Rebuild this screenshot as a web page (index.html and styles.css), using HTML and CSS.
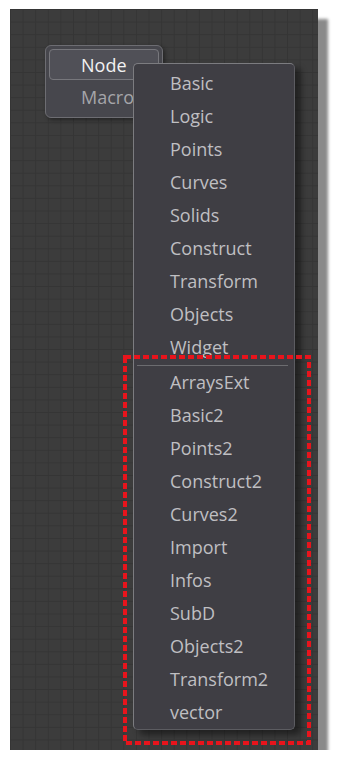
FILE: index.html
```html
<!DOCTYPE html>
<html lang="en">
<head>
    <meta charset="UTF-8">
    <title>Node Menu</title>
    <link rel="stylesheet" href="styles.css">
</head>
<body>
    <div class="canvas">
        <div class="menu">
            <div class="menu-item active">Node</div>
            <div class="menu-item">Macro</div>
        </div>

        <ul class="submenu">
            <li>Basic</li>
            <li>Logic</li>
            <li>Points</li>
            <li>Curves</li>
            <li>Solids</li>
            <li>Construct</li>
            <li>Transform</li>
            <li>Objects</li>
            <li>Widget</li>
            <li class="separator"></li>
            <li>ArraysExt</li>
            <li>Basic2</li>
            <li>Points2</li>
            <li>Construct2</li>
            <li>Curves2</li>
            <li>Import</li>
            <li>Infos</li>
            <li>SubD</li>
            <li>Objects2</li>
            <li>Transform2</li>
            <li>vector</li>
        </ul>

        <!-- highlight around the extra categories -->
        <svg class="highlight" width="188" height="390" viewBox="0 0 188 390">
            <rect x="2" y="2" width="184" height="386" fill="none" stroke="#e8141c" stroke-width="4" stroke-dasharray="6 3"/>
        </svg>
    </div>
</body>
</html>
```

FILE: styles.css
```css
* {
    margin: 0;
    padding: 0;
    box-sizing: border-box;
}

body {
    background: #fff;
    font-family: "Open Sans", "Noto Sans", sans-serif;
    font-size: 18px;
}

/* Dark grid canvas */
.canvas {
    position: relative;
    margin: 9px 0 0 10px;
    width: 308px;
    height: 741px;
    padding: 36px 0 0 35px;
    background-color: #3c3c3c;
    background-image:
        linear-gradient(to right, #353535 1px, transparent 1px),
        linear-gradient(to bottom, #353535 1px, transparent 1px);
    background-size: 12.6px 12.6px;
    box-shadow: 10px 10px 3px #8a8a8a;
}

/* Top level menu */
.menu {
    width: 118px;
    height: 73px;
    padding: 3px;
    background: #47474d;
    border: 1px solid #6d6d72;
    border-radius: 6px;
    box-shadow: 2px 2px 4px rgba(0, 0, 0, 0.4);
}

.menu-item {
    height: 31px;
    line-height: 31px;
    padding-left: 31px;
    color: #a5a5a9;
    border: 1px solid transparent;
    border-radius: 4px;
}

.menu-item.active {
    margin-bottom: 1px;
    color: #f2f2f2;
    background: #505057;
    border-color: #77777c;
}

/* Category submenu */
.submenu {
    position: absolute;
    left: 123px;
    top: 54px;
    width: 162px;
    height: 667px;
    padding-top: 3px;
    list-style: none;
    background: #3f3e44;
    border: 1px solid #5c5c61;
    border-top-color: #7c7c80;
    border-left-color: #7c7c80;
    border-radius: 5px;
    box-shadow: 6px 5px 6px rgba(0, 0, 0, 0.45);
}

.submenu li {
    height: 33px;
    line-height: 33px;
    padding-left: 36px;
    color: #bfbfc2;
}

.submenu .separator {
    height: 2px;
    margin: 0 6px 0 3px;
    border-bottom: 1px solid #6c6c70;
}

.highlight {
    position: absolute;
    left: 113px;
    top: 346px;
}
```
